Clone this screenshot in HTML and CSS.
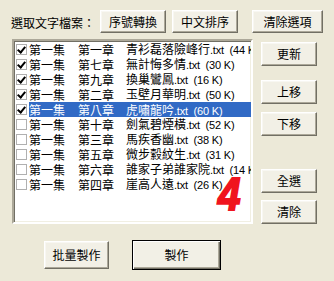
FILE: index.html
```html
<!DOCTYPE html>
<html>
<head>
<meta charset="utf-8">
<link rel="stylesheet" href="styles.css">
</head>
<body>
<div class="dialog">
  <div class="toprow">
    <span class="label">選取文字檔案：</span>
    <button class="btn b-seq">序號轉換</button>
    <button class="btn b-sort">中文排序</button>
    <button class="btn b-clear">清除選項</button>
  </div>
  <div class="middle">
    <div class="listbox">
      <div class="row"><span class="cb on"></span><span class="c1">第一集</span><span class="c2">第一章</span><span class="c3">青衫磊落險峰行<span class="ext">.txt&nbsp; (44 K)</span></span></div>
      <div class="row"><span class="cb on"></span><span class="c1">第一集</span><span class="c2">第七章</span><span class="c3">無計悔多情<span class="ext">.txt&nbsp; (30 K)</span></span></div>
      <div class="row"><span class="cb on"></span><span class="c1">第一集</span><span class="c2">第九章</span><span class="c3">換巢鸞鳳<span class="ext">.txt&nbsp; (16 K)</span></span></div>
      <div class="row"><span class="cb on"></span><span class="c1">第一集</span><span class="c2">第二章</span><span class="c3">玉壁月華明<span class="ext">.txt&nbsp; (50 K)</span></span></div>
      <div class="row sel"><span class="cb on"></span><span class="hl"><span class="c1">第一集</span><span class="c2">第八章</span><span class="c3">虎嘯龍吟<span class="ext">.txt&nbsp; (60 K)</span></span></span></div>
      <div class="row"><span class="cb"></span><span class="c1">第一集</span><span class="c2">第十章</span><span class="c3">劍氣碧煙橫<span class="ext">.txt&nbsp; (52 K)</span></span></div>
      <div class="row"><span class="cb"></span><span class="c1">第一集</span><span class="c2">第三章</span><span class="c3">馬疾香幽<span class="ext">.txt&nbsp; (38 K)</span></span></div>
      <div class="row"><span class="cb"></span><span class="c1">第一集</span><span class="c2">第五章</span><span class="c3">微步縠紋生<span class="ext">.txt&nbsp; (31 K)</span></span></div>
      <div class="row"><span class="cb"></span><span class="c1">第一集</span><span class="c2">第六章</span><span class="c3">誰家子弟誰家院<span class="ext">.txt&nbsp; (14 K)</span></span></div>
      <div class="row"><span class="cb"></span><span class="c1">第一集</span><span class="c2">第四章</span><span class="c3">崖高人遠<span class="ext">.txt&nbsp; (26 K)</span></span></div>
      <span class="mark">4</span>
    </div>
    <div class="side">
      <button class="btn sb s-upd">更新</button>
      <button class="btn sb s-up">上移</button>
      <button class="btn sb s-down">下移</button>
      <button class="btn sb s-all">全選</button>
      <button class="btn sb s-none">清除</button>
    </div>
  </div>
  <div class="bottom">
    <button class="btn b-batch">批量製作</button>
    <button class="btn b-make">製作</button>
  </div>
</div>
</body>
</html>
```
FILE: styles.css
```css
html, body {
  margin: 0;
  padding: 0;
  background: #ECE9D8;
  width: 334px;
  height: 281px;
  overflow: hidden;
}
.dialog {
  font-family: "Noto Sans CJK TC", "Liberation Sans", sans-serif;
  font-size: 12px;
  color: #000;
  padding: 10px 0 0 0;
}
.btn {
  font-family: "Noto Sans CJK TC", "Liberation Sans", sans-serif;
  font-size: 12px;
  color: #000;
  background: #F2F0E6;
  border: 1px solid;
  border-color: #FFFFFF #716F64 #716F64 #FFFFFF;
  box-shadow: inset -1px -1px 0 #ACA899, inset 1px 1px 0 #F8F7F2;
  padding: 0;
  margin: 0;
  line-height: 1;
  display: flex;
  align-items: center;
  justify-content: center;
}
.toprow {
  display: flex;
  align-items: center;
  height: 23px;
}
.label {
  margin-left: 11px;
  width: 89px;
  padding-top: 1px;
}
.b-seq { width: 66px; height: 23px; }
.b-sort { width: 66px; height: 23px; margin-left: 6px; }
.b-clear { width: 71px; height: 23px; margin-left: 14px; }

.middle {
  display: flex;
  margin-top: 6px;
}
.listbox {
  position: relative;
  margin-left: 12px;
  width: 237px;
  height: 180px;
  background: #FFFFFF;
  border: 2px solid;
  border-color: #ACA899 #FFFFFF #FFFFFF #ACA899;
  box-shadow: inset 1px 1px 0 #716F64, inset -1px -1px 0 #F1EFE2;
  padding-top: 1px;
  overflow: hidden;
}
.row {
  display: flex;
  align-items: center;
  height: 15px;
  white-space: nowrap;
  line-height: 15px;
}
.cb {
  flex: none;
  box-sizing: border-box;
  width: 11px;
  height: 11px;
  margin-left: 2px;
  margin-right: 2px;
  border: 1px solid #B0B0B0;
  background: #fff;
  position: relative;
}
.cb.on::after {
  content: "";
  position: absolute;
  left: 2px;
  top: 0px;
  width: 3px;
  height: 6px;
  border: solid #000;
  border-width: 0 2px 2px 0;
  transform: rotate(40deg);
}
.hl {
  display: flex;
  background: #316AC5;
  color: #fff;
  width: 222px;
  height: 15px;
}
.c1 { flex: none; width: 49px; }
.c2 { flex: none; width: 48px; }
.c3 { flex: none; }
.ext {
  font-family: "Liberation Sans", "DejaVu Sans", sans-serif;
  font-size: 11px;
  letter-spacing: -0.2px;
}
.mark {
  position: absolute;
  left: 204px;
  top: 130px;
  font-family: "Liberation Sans", sans-serif;
  font-weight: bold;
  font-style: italic;
  font-size: 46px;
  line-height: 1;
  color: #F0141E;
  -webkit-text-stroke: 2px #F0141E;
  transform: scaleX(0.88);
  transform-origin: left top;
}
.side {
  display: flex;
  flex-direction: column;
  margin-left: 8px;
  padding-top: 3px;
}
.sb { width: 56px; height: 24px; }
.s-up { margin-top: 14px; }
.s-down { margin-top: 8px; }
.s-all { margin-top: 33px; }
.s-none { margin-top: 7px; }

.bottom {
  display: flex;
  align-items: center;
  margin-top: 16px;
  padding-left: 44px;
}
.b-batch { width: 65px; height: 28px; }
.b-make {
  width: 89px;
  height: 30px;
  margin-left: 23px;
  border: 1px solid #000;
  box-shadow: inset 1px 1px 0 #FFFFFF, inset -1px -1px 0 #716F64, inset -2px -2px 0 #ACA899;
}
```
